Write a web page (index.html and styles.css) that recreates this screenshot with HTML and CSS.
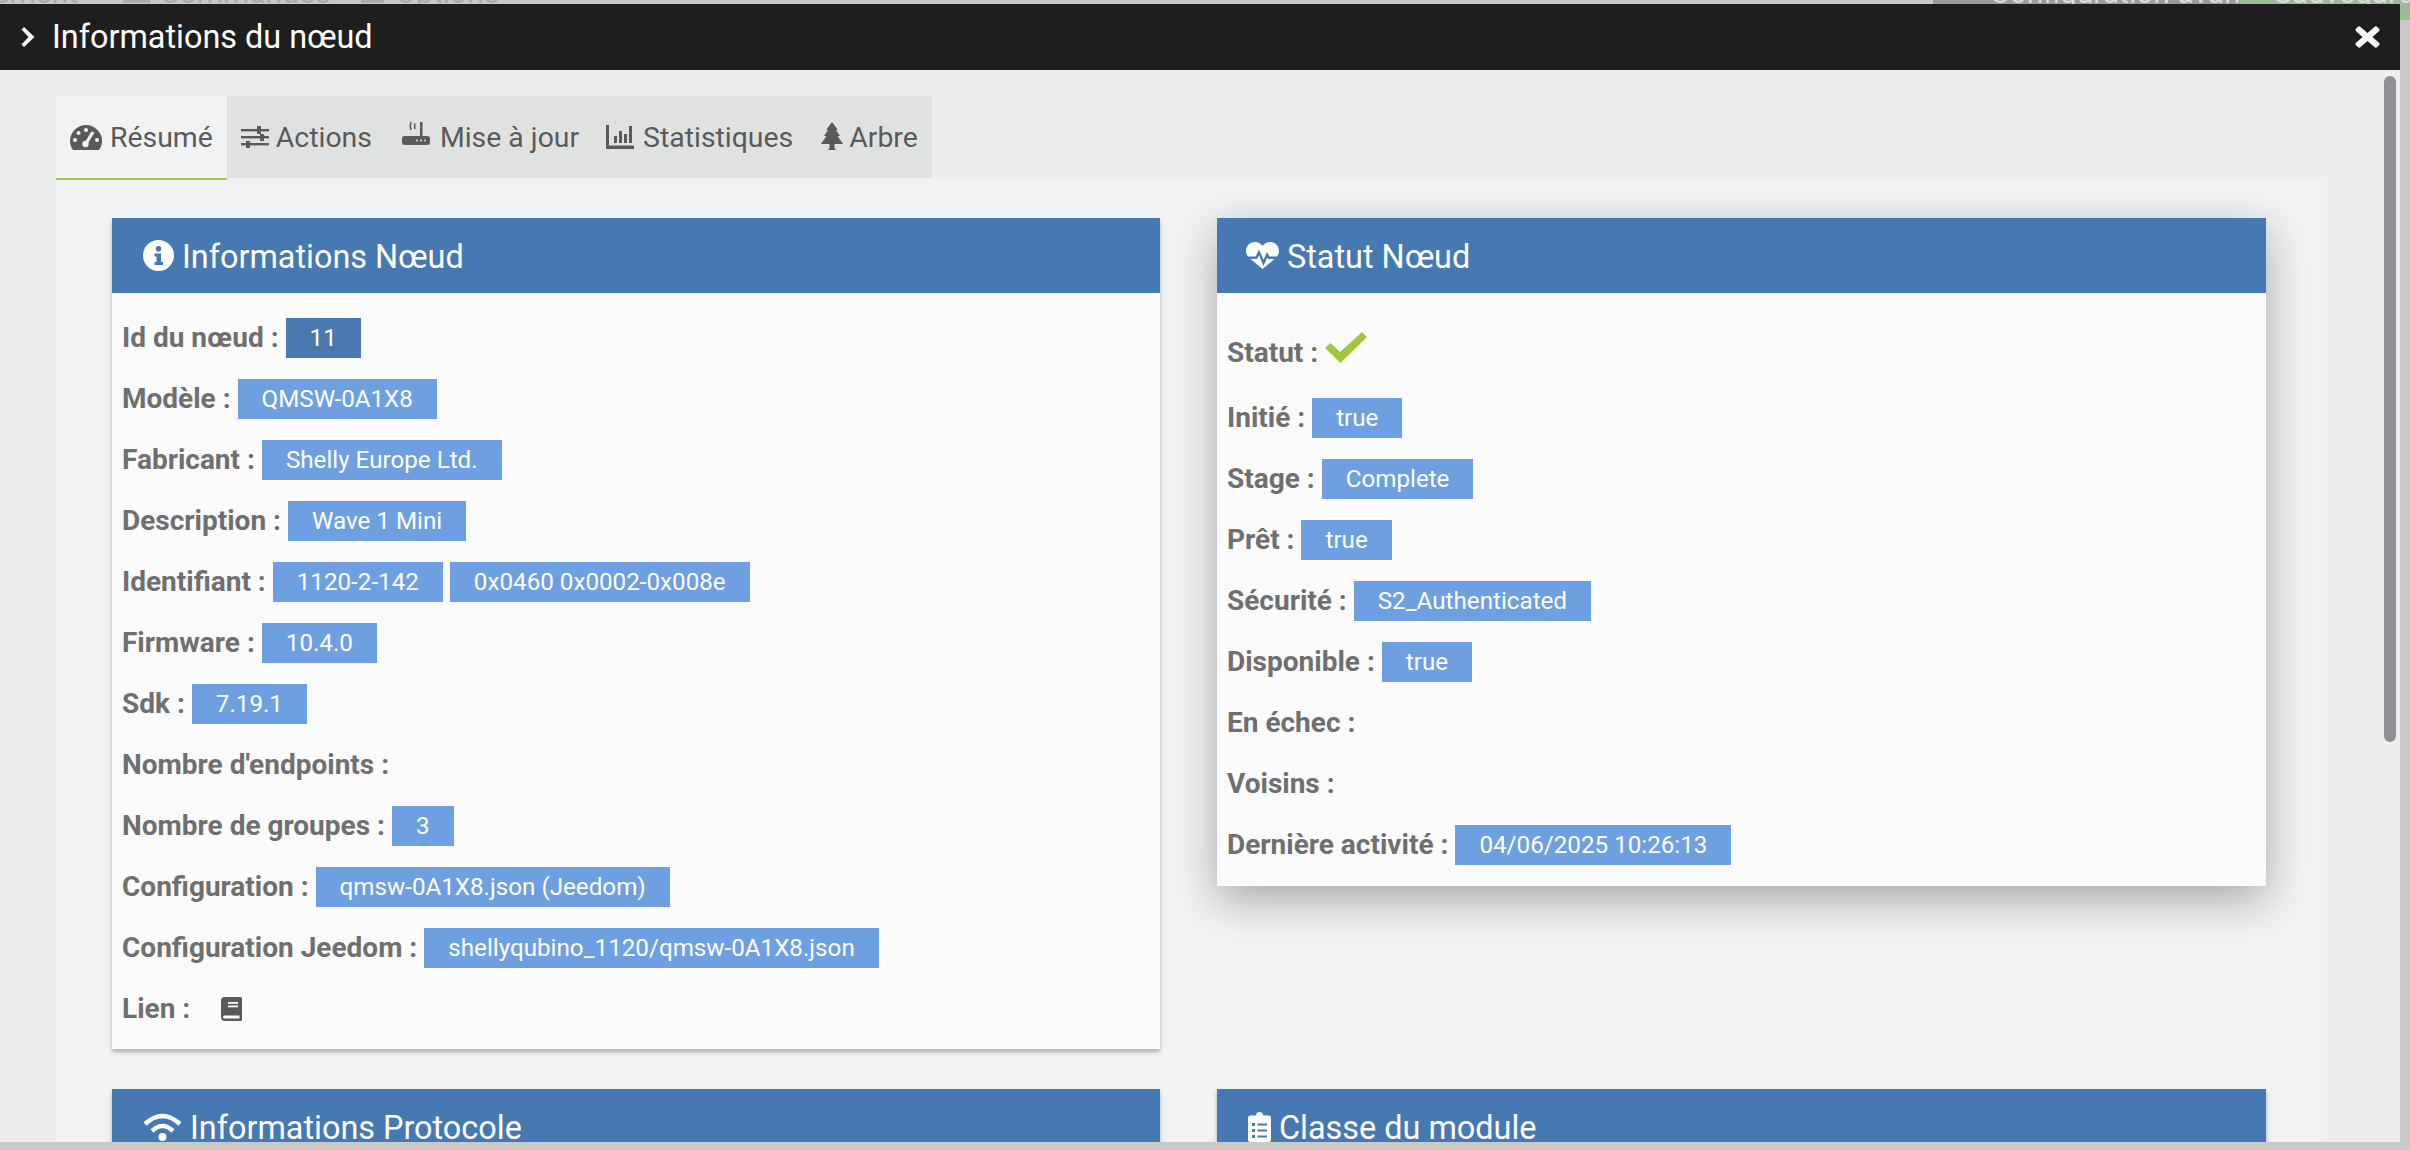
FILE: index.html
```html
<!DOCTYPE html>
<html lang="fr">
<head>
    <meta charset="UTF-8">
    <meta name="viewport" content="width=device-width, initial-scale=1.0">
    <title>Informations du nœud</title>
    <link rel="stylesheet" href="styles.css">
</head>
<body>
    <!-- page behind the modal, only its bottom edge shows -->
    <div class="behind">
        <span class="behind-text behind-first">ement</span>
        <span class="behind-icon behind-icon-1"></span>
        <span class="behind-text">Commandes</span>
        <span class="behind-icon behind-icon-2"></span>
        <span class="behind-text">Options</span>
        <span class="behind-btn behind-grey"><span class="behind-text">Configuration avancée</span></span>
        <span class="behind-btn behind-green"><span class="behind-dot"></span><span class="behind-text">Sauvegarder</span></span>
    </div>

    <div class="modal">
        <div class="modal-title">
            <svg class="title-chevron" viewBox="0 0 14 20"><path d="M3 0 L13.5 10 L3 20 L0.5 17.5 L7.5 10 L0.5 2.5 Z"/></svg>
            <span class="title-text">Informations du nœud</span>
            <svg class="title-close" viewBox="0 0 25 22"><path d="M5 0.5 L12.5 7 L20 0.5 Q21 0 22 0.8 L24.3 3 Q25 4 24.2 5 L17.5 11 L24.2 17 Q25 18 24.3 19 L22 21.2 Q21 22 20 21.5 L12.5 15 L5 21.5 Q4 22 3 21.2 L0.7 19 Q0 18 0.8 17 L7.5 11 L0.8 5 Q0 4 0.7 3 L3 0.8 Q4 0 5 0.5 Z"/></svg>
        </div>

        <div class="modal-body">
            <div class="scrollbar"></div>

            <div class="tabs">
                <div class="tab tab-active">
                    <svg class="tab-icon icon-gauge" viewBox="0 0 32 25">
                        <path d="M16 0 A16 16 0 0 0 0 16 C0 19.5 1.2 22.5 3 25 H29 C30.8 22.5 32 19.5 32 16 A16 16 0 0 0 16 0 Z"/>
                        <g class="cut">
                            <circle cx="16" cy="5" r="2"/><circle cx="8.5" cy="8" r="2"/><circle cx="5" cy="15" r="2"/>
                            <circle cx="27" cy="15" r="2"/>
                            <circle cx="15.5" cy="19" r="3.2"/>
                            <path d="M21.5 6.5 L24.5 7.5 L18 18 L15 17 Z"/>
                        </g>
                    </svg>
                    <span>Résumé</span>
                </div>
                <div class="tab tab-actions">
                    <svg class="tab-icon icon-sliders" viewBox="0 0 28 22">
                        <rect x="0" y="3" width="28" height="2.4"/><rect x="16" y="0" width="4" height="8"/>
                        <rect x="0" y="10" width="28" height="2.4"/><rect x="19" y="8" width="4" height="7"/>
                        <rect x="0" y="17" width="28" height="2.4"/><rect x="5" y="15" width="4" height="7"/>
                    </svg>
                    <span>Actions</span>
                </div>
                <div class="tab tab-update">
                    <svg class="tab-icon icon-router" viewBox="0 0 28 24">
                        <path d="M2.5 15 H18 V1 H20.5 V15 H25.5 Q28 15 28 17.5 V21 Q28 24 25.5 24 H2.5 Q0 24 0 21 V17.5 Q0 15 2.5 15 Z"/>
                        <g class="cut"><circle cx="15" cy="19.5" r="1"/><circle cx="19" cy="19.5" r="1"/><circle cx="23" cy="19.5" r="1"/></g>
                        <path class="arc" d="M9 1 Q7.5 5 9 9 M13 2.5 Q12 5 13 8"/>
                    </svg>
                    <span>Mise à jour</span>
                </div>
                <div class="tab tab-stats">
                    <svg class="tab-icon icon-chart" viewBox="0 0 28 24">
                        <path d="M0 0 H3 V20.5 H28 V24 H0 Z"/>
                        <rect x="8" y="11" width="3" height="7"/><rect x="13" y="6" width="3" height="12"/>
                        <rect x="18" y="9" width="3" height="9"/><rect x="23" y="1" width="3" height="17"/>
                    </svg>
                    <span>Statistiques</span>
                </div>
                <div class="tab tab-tree">
                    <svg class="tab-icon icon-tree" viewBox="0 0 22 28">
                        <path d="M11 0 L17 8 H15 L19 14 H16.5 L22 22 H13.5 V26 L15 28 H7 L8.5 26 V22 H0 L5.5 14 H3 L7 8 H5 Z"/>
                    </svg>
                    <span>Arbre</span>
                </div>
            </div>

            <div class="panel">
                <section class="card">
                    <h2 class="card-title">
                        <svg class="icon-info" viewBox="0 0 31 31">
                            <path fill-rule="evenodd" d="M15.5 0 A15.5 15.5 0 1 0 15.5 31 A15.5 15.5 0 1 0 15.5 0 Z M15.5 6 A2.8 2.8 0 1 1 15.5 11.6 A2.8 2.8 0 1 1 15.5 6 Z M11.5 13.5 H18 V22 H20 V25 H11.5 V22 H13.5 V16.5 H11.5 Z"/>
                        </svg>
                        Informations Nœud
                    </h2>
                    <div class="card-body">
                        <div class="row"><span class="label">Id du nœud :</span><span class="badge badge-dark">11</span></div>
                        <div class="row"><span class="label">Modèle :</span><span class="badge">QMSW-0A1X8</span></div>
                        <div class="row"><span class="label">Fabricant :</span><span class="badge">Shelly Europe Ltd.</span></div>
                        <div class="row"><span class="label">Description :</span><span class="badge">Wave 1 Mini</span></div>
                        <div class="row"><span class="label">Identifiant :</span><span class="badge">1120-2-142</span><span class="badge">0x0460 0x0002-0x008e</span></div>
                        <div class="row"><span class="label">Firmware :</span><span class="badge">10.4.0</span></div>
                        <div class="row"><span class="label">Sdk :</span><span class="badge">7.19.1</span></div>
                        <div class="row"><span class="label">Nombre d'endpoints :</span></div>
                        <div class="row"><span class="label">Nombre de groupes :</span><span class="badge">3</span></div>
                        <div class="row"><span class="label">Configuration :</span><span class="badge">qmsw-0A1X8.json (Jeedom)</span></div>
                        <div class="row"><span class="label">Configuration Jeedom :</span><span class="badge">shellyqubino_1120/qmsw-0A1X8.json</span></div>
                        <div class="row">
                            <span class="label">Lien :</span>
                            <svg class="icon-book" viewBox="0 0 21 24">
                                <path d="M4 0 H19.5 Q21 0 21 1.5 V22.5 Q21 24 19.5 24 H4 Q0 24 0 20 V4 Q0 0 4 0 Z"/>
                                <g class="cut-card"><rect x="7" y="5" width="10" height="1.8"/><rect x="7" y="8.5" width="10" height="1.8"/><path d="M3.5 18.5 H18.5 V21.5 H3.5 Q2 21.5 2 20 T3.5 18.5 Z"/></g>
                            </svg>
                        </div>
                    </div>
                </section>

                <section class="card card-raised">
                    <h2 class="card-title">
                        <svg class="icon-heart" viewBox="0 0 33 27">
                            <path fill-rule="evenodd" d="M9 0 C12 0 14.5 1.5 16.5 3.8 C18.5 1.5 21 0 24 0 C29.5 0 33 4 33 9 C33 11 32.3 13 31 14.5 H23.5 L21 10 L17.5 18 L13 7.5 L9.5 14.5 H2 C0.7 13 0 11 0 9 C0 4 3.5 0 9 0 Z M4.5 17 H11 L13 13.2 L17.5 24 L21.3 15.5 L22 17 H28.5 L16.5 27 Z"/>
                        </svg>
                        Statut Nœud
                    </h2>
                    <div class="card-body card-body-status">
                        <div class="row row-status">
                            <span class="label">Statut :</span>
                            <svg class="icon-check" viewBox="0 0 42 31"><path d="M0 16 L5.5 11 L15 20 L37 0 L42 5 L15.5 31 Z"/></svg>
                        </div>
                        <div class="row"><span class="label">Initié :</span><span class="badge">true</span></div>
                        <div class="row"><span class="label">Stage :</span><span class="badge">Complete</span></div>
                        <div class="row"><span class="label">Prêt :</span><span class="badge">true</span></div>
                        <div class="row"><span class="label">Sécurité :</span><span class="badge">S2_Authenticated</span></div>
                        <div class="row"><span class="label">Disponible :</span><span class="badge">true</span></div>
                        <div class="row"><span class="label">En échec :</span></div>
                        <div class="row"><span class="label">Voisins :</span></div>
                        <div class="row"><span class="label">Dernière activité :</span><span class="badge">04/06/2025 10:26:13</span></div>
                    </div>
                </section>

                <section class="card">
                    <h2 class="card-title">
                        <svg class="icon-wifi" viewBox="0 0 39 28">
                            <path class="arc-wifi" d="M2 11 Q19.5 -5 37 11 M9 18 Q19.5 8 30 18"/>
                            <circle cx="19.5" cy="24" r="4"/>
                        </svg>
                        Informations Protocole
                    </h2>
                </section>

                <section class="card">
                    <h2 class="card-title">
                        <svg class="icon-clip" viewBox="0 0 23 30">
                            <path fill-rule="evenodd" d="M11.5 0 A3.5 3.5 0 0 1 15 3.5 H20.5 Q23 3.5 23 6 V27.5 Q23 30 20.5 30 H2.5 Q0 30 0 27.5 V6 Q0 3.5 2.5 3.5 H8 A3.5 3.5 0 0 1 11.5 0 Z M4 11 V14 H7 V11 Z M9.5 11.5 V13.5 H19 V11.5 Z M4 17 V20 H7 V17 Z M9.5 17.5 V19.5 H19 V17.5 Z M4 23 V26 H7 V23 Z M9.5 23.5 V25.5 H19 V23.5 Z"/>
                        </svg>
                        Classe du module
                    </h2>
                </section>
            </div>
        </div>
    </div>
</body>
</html>
```

FILE: styles.css
```css
* {
    box-sizing: border-box;
}
html, body {
    height: 100%;
}
body {
    margin: 0;
    overflow: hidden;
    background: #c9c9c9;
    font-family: Roboto, 'Liberation Sans', sans-serif;
}

/* page behind */
.behind {
    display: flex;
    height: 20px;
    overflow: hidden;
    font-size: 30px;
    color: #a9a9a9;
}
.behind-text {
    line-height: 6px;
    margin-top: -10px;
    white-space: nowrap;
}
.behind-first {
    display: flex;
    justify-content: flex-end;
    width: 78px;
}
.behind-icon {
    height: 3px;
    background: #a9a9a9;
}
.behind-icon-1 {
    width: 27px;
    margin: 0 10px 0 45px;
}
.behind-icon-2 {
    width: 23px;
    margin: 0 11px 0 31px;
}
.behind-btn {
    display: flex;
    color: #dcdcdc;
}
.behind-grey {
    width: 307px;
    margin-left: auto;
    padding-left: 57px;
    background: #9a9a9a;
}
.behind-green {
    width: 170px;
    padding-left: 20px;
    background: #9db99a;
}
.behind-dot {
    width: 14px;
    height: 3px;
    margin-right: 14px;
    background: #dcdcdc;
}

/* modal */
.modal {
    position: absolute;
    top: 4px;
    left: 0;
    display: flex;
    flex-direction: column;
    width: 2400px;
    height: 1138px;
    overflow: hidden;
    background: #edefee;
}
.modal-title {
    display: flex;
    align-items: center;
    flex: none;
    height: 66px;
    padding: 0 20px 0 21px;
    background: #1e1e1e;
    color: #fff;
    font-size: 32.4px;
}
.title-chevron {
    width: 14px;
    height: 20px;
    fill: #f5f5f5;
}
.title-text {
    margin-left: 17px;
}
.title-close {
    width: 25px;
    height: 22px;
    margin-left: auto;
    fill: #f5f5f5;
}
.modal-body {
    position: relative;
    flex: 1;
    min-height: 0;
    padding: 26px 0 0 56px;
}
.scrollbar {
    position: absolute;
    top: 6px;
    left: 2384px;
    width: 12px;
    height: 666px;
    border-radius: 6px;
    background: #8e8f97;
}

/* tabs */
.tabs {
    display: flex;
    height: 84px;
}
.tab {
    display: flex;
    align-items: center;
    gap: 8px;
    height: 84px;
    padding: 0 14px;
    background: #e0e2e1;
    border-bottom: 2px solid #f0f2f4;
    color: #5a5a5a;
    font-size: 28.4px;
    white-space: nowrap;
}
.tab-active {
    background: #f0f2f4;
    border-bottom-color: #a0c640;
}
.tab-actions {
    gap: 7px;
    padding-right: 13px;
}
.tab-update {
    padding: 0 13px 0 17px;
    gap: 10px;
}
.tab-stats {
    gap: 9px;
}
.tab-tree {
    gap: 6px;
}
.tab-icon {
    flex: none;
    fill: #5a5a5a;
}
.icon-gauge {
    width: 32px;
    height: 25px;
}
.icon-gauge .cut {
    fill: #f0f2f4;
}
.icon-sliders {
    width: 28px;
    height: 22px;
}
.icon-router {
    width: 28px;
    height: 24px;
    margin-top: -8px;
}
.icon-router .cut {
    fill: #e0e2e1;
}
.icon-router .arc {
    fill: none;
    stroke: #5a5a5a;
    stroke-width: 1.6;
}
.icon-chart {
    width: 28px;
    height: 24px;
}
.icon-tree {
    width: 22px;
    height: 28px;
    margin-top: -2px;
}

/* panel and cards */
.panel {
    display: grid;
    grid-template-columns: 1048px 1049px;
    column-gap: 57px;
    row-gap: 40px;
    align-items: start;
    align-content: start;
    width: 2265px;
    height: 1000px;
    padding: 38px 55px 0 56px;
    background: #f0f2f4;
}
.card {
    background: #fbfbfb;
    box-shadow: 0 3px 4px rgba(0, 0, 0, 0.28);
}
.card-raised {
    box-shadow: 0 14px 42px rgba(0, 0, 0, 0.3);
}
.card-title {
    display: flex;
    align-items: center;
    gap: 8px;
    height: 75px;
    margin: 0;
    padding: 2px 0 0 31px;
    background: #4679b2;
    color: #fff;
    font-size: 32.4px;
    font-weight: 400;
}
.card-title svg {
    margin-top: -2px;
}
.card-body {
    padding: 15px 10px 9px;
}
.card-body-status {
    padding: 0 10px 10px;
}
.row {
    display: flex;
    gap: 7px;
    height: 61px;
    padding-top: 10px;
    white-space: nowrap;
}
.row-status {
    gap: 7px;
    height: 95px;
    padding-top: 39px;
}
.row-status .label {
    margin-top: 1px;
}
.label {
    color: #6f6f6f;
    font-size: 28px;
    font-weight: 700;
    line-height: 40px;
}
.badge {
    height: 40px;
    padding: 0 24px;
    background: #6e9fe0;
    color: #fff;
    font-size: 24.2px;
    line-height: 40px;
}
.badge-dark {
    background: #4a78b0;
}

/* icons */
.icon-info {
    width: 31px;
    height: 31px;
    fill: #fff;
}
.icon-heart {
    width: 33px;
    height: 27px;
    margin-left: -2px;
    fill: #fff;
}
.icon-check {
    width: 42px;
    height: 31px;
    fill: #a0c640;
}
.icon-book {
    width: 21px;
    height: 24px;
    margin: 8px 0 0 24px;
    fill: #5a5a5a;
}
.icon-book .cut-card {
    fill: #fbfbfb;
}
.icon-wifi {
    width: 39px;
    height: 28px;
    fill: #fff;
}
.arc-wifi {
    fill: none;
    stroke: #fff;
    stroke-width: 4.5;
}
.icon-clip {
    width: 23px;
    height: 30px;
    fill: #fff;
}
```
